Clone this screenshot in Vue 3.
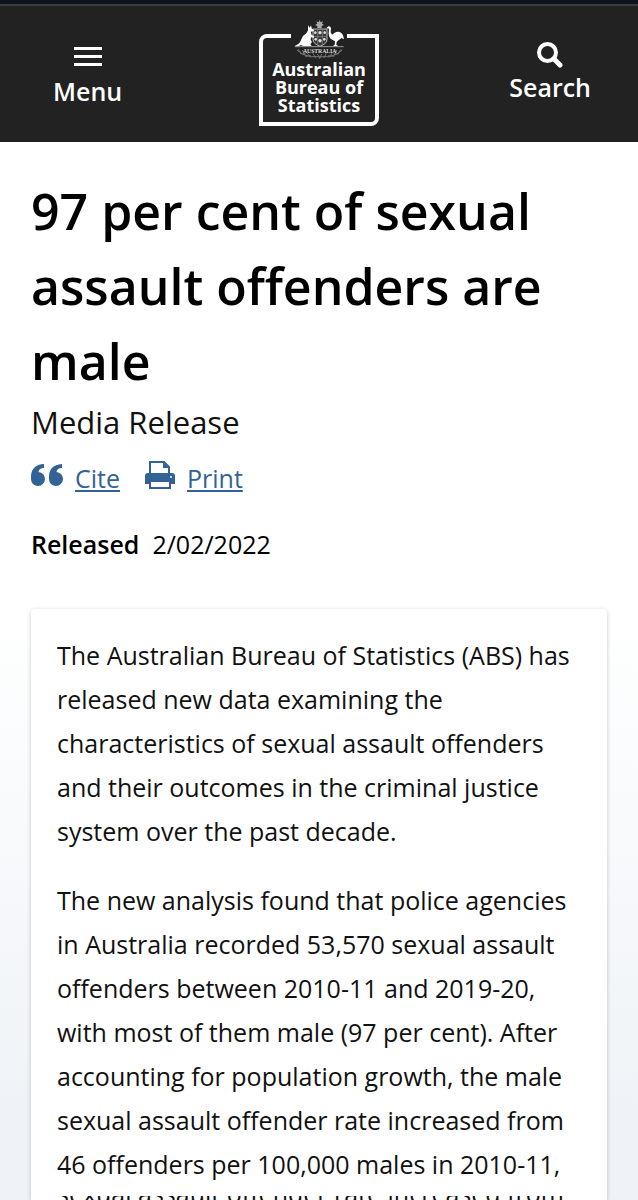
<script setup>
const paragraphs = [
  "The Australian Bureau of Statistics (ABS) has released new data examining the characteristics of sexual assault offenders and their outcomes in the criminal justice system over the past decade.",
  "The new analysis found that police agencies in Australia recorded 53,570 sexual assault offenders between 2010-11 and 2019-20, with most of them male (97 per cent). After accounting for population growth, the male sexual assault offender rate increased from 46 offenders per 100,000 males in 2010-11,",
];
const nextLine = "sexual assault offender rate increased from";
</script>

<template>
  <div class="page">
    <header class="header">
      <button class="nav-btn menu" type="button">
        <svg width="28" height="19" viewBox="0 0 28 19" aria-hidden="true">
          <path d="M0 0h28v3H0zM0 8h28v3H0zM0 16h28v3H0z" fill="#fff" />
        </svg>
        <span>Menu</span>
      </button>

      <a class="logo" href="#">
        <svg class="crest" width="56" height="40" viewBox="0 0 168 120" aria-hidden="true">
          <!-- star -->
          <path d="M86 0l3 7 7-3-3 7 6 4-7 3v6H79v-6l-7-3 7-4-3-7 7 3z" fill="#aaa" />
          <!-- shield -->
          <path d="M66 27h42v32q0 12-21 20-21-8-21-20z" fill="#3a3a3a" stroke="#bbb" stroke-width="3" />
          <path d="M80 27v46M94 27v46M66 50h42" stroke="#888" stroke-width="2" />
          <g fill="#ddd">
            <circle cx="73" cy="38" r="4" />
            <circle cx="87" cy="38" r="5" />
            <circle cx="101" cy="38" r="4" />
            <circle cx="74" cy="58" r="4" />
            <circle cx="87" cy="62" r="5" />
            <circle cx="100" cy="58" r="4" />
          </g>
          <!-- kangaroo -->
          <path d="M51 16l5 7 4-7 2 9 7 6-2 3-8 1 3 10 7 3-1 5-8-1-1 7 4 7-5 7 4 5H36l-6-3-8 4H10l12-7q7-6 9-14 3-11 15-18l5-9z" fill="#fff" />
          <!-- emu -->
          <path d="M106 25l6-6q6-1 8 5l-1 13 4 7 8-6q10-5 19 0 7 5 9 20l-7-4-10 7-5 5-1 9 7 4h-18l6-5 1-10-8-5q-10-4-11-18l1-15z" fill="#fff" />
          <path d="M12 80h146" stroke="#999" stroke-width="3" />
          <!-- wattle -->
          <path d="M18 90q14 16 40 20h56q26-4 40-20M22 88l10 14M34 90l9 16M28 101l16 1M48 98l10 14M42 109l18-2M66 100l8 14M80 102l6 14 6-14M106 100l-8 14M124 98l-10 14M130 109l-18-2M138 90l-9 16M144 101l-16 1M150 88l-10 14" fill="none" stroke="#777" stroke-width="3" />
          <text x="86" y="98" text-anchor="middle" class="crest-name">AUSTRALIA</text>
        </svg>
        <span class="logo-name">Australian<br />Bureau of<br />Statistics</span>
      </a>

      <button class="nav-btn search" type="button">
        <svg width="26" height="26" viewBox="0 0 26 26" fill="none" stroke="#fff" aria-hidden="true">
          <circle cx="10.500" cy="10.500" r="8.500" stroke-width="4" />
          <path d="M17 17l6 6" stroke-width="5" stroke-linecap="round" />
        </svg>
        <span>Search</span>
      </button>
    </header>

    <main>
      <section class="intro">
        <h1>97 per cent of sexual assault offenders are male</h1>
        <p class="type">Media Release</p>
        <div class="actions">
          <a href="#">
            <svg width="32" height="22" viewBox="0 0 32 22" fill="#336297" aria-hidden="true">
              <path d="M13 0v4Q8 4 7.500 8A7 7 0 1 1 0 15Q-1 1 13 0z" />
              <path d="M31 0v4Q26 4 25.500 8A7 7 0 1 1 18 15Q17 1 31 0z" />
            </svg>
            <span>Cite</span>
          </a>
          <a href="#">
            <svg width="30" height="28" viewBox="0 0 30 28" aria-hidden="true">
              <path d="M5 13V1h14l5 5v7" fill="#fff" stroke="#336297" stroke-width="2" />
              <path d="M18 1v6h6z" fill="#336297" />
              <path d="M3 12h24q3 0 3 3v8H0v-8q0-3 3-3z" fill="#336297" />
              <path d="M5 20h20v7H5z" fill="#fff" stroke="#336297" stroke-width="2" />
              <circle cx="26" cy="16" r="1" fill="#fff" />
            </svg>
            <span>Print</span>
          </a>
        </div>
        <p class="released"><strong>Released</strong><time datetime="2022-02-02">2/02/2022</time></p>
      </section>

      <div class="body">
        <article class="card">
          <p v-for="(text, i) in paragraphs" :key="i">{{ text }}</p>
          <div class="cut"><p>{{ nextLine }}</p></div>
        </article>
      </div>
    </main>
  </div>
</template>

<style>
body {
  margin: 0;
  background: #fff;
}
</style>

<style scoped>
.page {
  display: flow-root;
  font-family: "Open Sans", "Noto Sans", sans-serif;
  font-size: 25px;
  color: #111;
}

p,
h1 {
  margin: 0;
}

.header {
  display: grid;
  grid-template-columns: 1fr 120px 1fr;
  align-items: start;
  height: 138px;
  margin-top: 4px;
  box-sizing: border-box;
  background: #222;
  border-top: 2px solid #3b3d43;
  box-shadow: 0 -4px #10121c;
}

.nav-btn {
  display: flex;
  flex-direction: column;
  align-items: center;
  padding: 0;
  border: 0;
  background: none;
  color: #fff;
  font: inherit;
  font-weight: 600;
  line-height: 34px;
  cursor: pointer;
}

.menu {
  justify-self: start;
  margin: 41px 0 0 53px;
  gap: 8px;
}

.search {
  justify-self: end;
  margin: 36px 47px 0 0;
  gap: 2px;
}

.logo {
  position: relative;
  box-sizing: border-box;
  height: 92px;
  margin-top: 28px;
  padding-top: 22px;
  border: 4px solid #fff;
  border-radius: 8px 0;
  color: #fff;
  text-align: center;
  text-decoration: none;
}

.crest {
  position: absolute;
  top: -18px;
  left: 28px;
  background: #222;
}

.crest-name {
  font: bold 17px "Liberation Serif", serif;
  fill: #ddd;
}

.logo-name {
  display: block;
  font-size: 18px;
  font-weight: 700;
  line-height: 18px;
}

.intro {
  padding: 32px 31px 0;
}

h1 {
  font-size: 50px;
  font-weight: 600;
  line-height: 75px;
  color: #000;
}

.type {
  font-size: 31px;
  line-height: 46px;
}

.actions {
  display: flex;
  gap: 25px;
  margin-top: 11px;
}

.actions a {
  display: flex;
  align-items: center;
  gap: 12px;
  color: #336297;
  line-height: 44px;
  text-decoration: none;
}

.actions svg {
  margin-bottom: 6px;
}

.actions span {
  text-decoration: underline;
  text-decoration-thickness: 2px;
  text-underline-offset: 2px;
}

.released {
  display: flex;
  gap: 13px;
  margin-top: 22px;
  line-height: 44px;
  color: #000;
}

.released strong {
  font-weight: 600;
}

.body {
  margin-top: 43px;
  padding: 0 31px;
  background: linear-gradient(#fff, #eff3f7 500px);
}

.card {
  padding: 24px 24px 0 26px;
  background: #fff;
  border-radius: 4px 4px 0 0;
  box-shadow: 0 1px 4px rgba(0, 0, 0, 0.22);
}

.card p {
  line-height: 44px;
}

.card p + p {
  margin-top: 25px;
}

/* the following line, only its middle slice shows */
.cut {
  height: 4px;
  margin-top: 10px;
  overflow: hidden;
}

.cut p {
  margin-top: -25px;
}
</style>
